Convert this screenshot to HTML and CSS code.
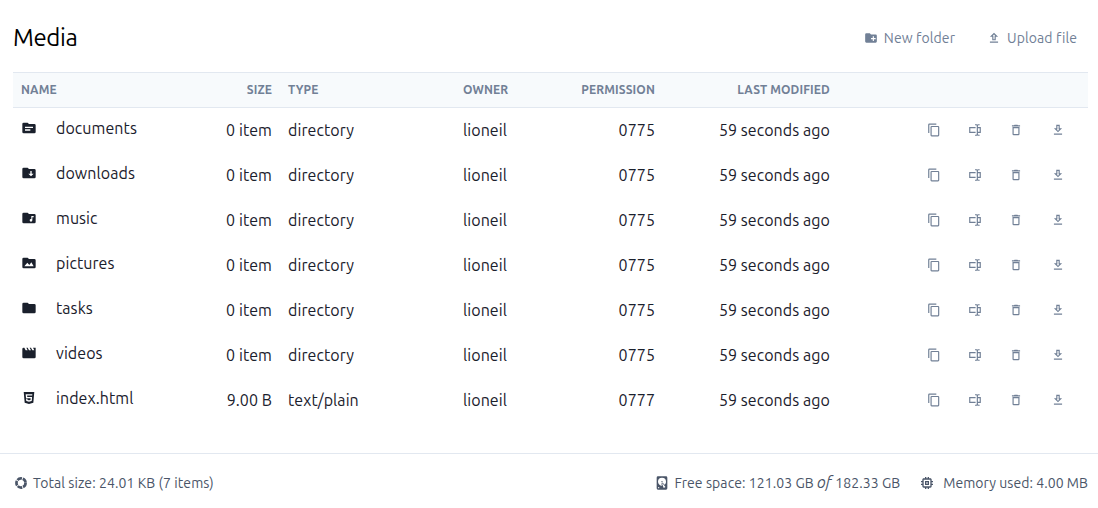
FILE: index.html
```
<!DOCTYPE html>
<html lang="en">
<head>
<meta charset="utf-8">
<title>Media</title>
<link rel="stylesheet" href="styles.css">
<script src="icons.js" defer></script>
</head>
<body>
<main class="page">
  <header class="topbar">
    <h1 class="title">Media</h1>
    <nav class="toolbar">
      <button class="tool"><i data-icon="folderPlus"></i><span>New folder</span></button>
      <button class="tool"><i data-icon="upload"></i><span>Upload file</span></button>
    </nav>
  </header>
  <table class="files">
    <colgroup><col class="c-name"><col class="c-size"><col class="c-type"><col class="c-owner"><col class="c-perm"><col class="c-date"><col class="c-actions"></colgroup>
    <thead>
      <tr><th>Name</th><th class="num">Size</th><th>Type</th><th>Owner</th><th class="num">Permission</th><th class="num">Last modified</th><th></th></tr>
    </thead>
    <tbody id="rows"></tbody>
  </table>
</main>
<footer class="status">
  <span class="stat"><i data-icon="donut"></i><span>Total size: 24.01 KB (7 items)</span></span>
  <span class="stat stat-free"><i data-icon="disk"></i><span>Free space: 121.03 GB <em class="of">of</em> 182.33 GB</span></span>
  <span class="stat stat-memory"><i data-icon="chip"></i><span>Memory used: 4.00 MB</span></span>
</footer>
</body>
</html>
```
FILE: icons.js
```
const folder = "M10,4H4A2,2 0 0,0 2,6V18A2,2 0 0,0 4,20H20A2,2 0 0,0 22,18V8A2,2 0 0,0 20,6H12Z";
const icons = {
  folder: folder,
  folderPlus: folder + "M15,9V12H12V14H15V17H17V14H20V12H17V9Z",
  folderText: folder + "M6,10H18V12H6ZM6,14H14V16H6Z",
  folderDown: folder + "M14,9H16V13H19L15,17L11,13H14Z",
  folderMusic: folder + "M19,9V11H17V15.5A2,2 0 1,1 15,13.5H15.5V9Z",
  folderImage: folder + "M5,17H19L15.5,11L12.5,15L9.5,11.5Z",
  movie: "M18,4L20,8H17L15,4H13L15,8H12L10,4H8L10,8H7L5,4H4A2,2 0 0,0 2,6V18A2,2 0 0,0 4,20H20A2,2 0 0,0 22,18V4Z",
  html: "M12,17.56L16.07,16.43L16.62,10.33H9.38L9.2,8.3H16.8L17,6.31H7L7.56,12.32H14.45L14.22,14.9L12,15.5L9.78,14.9L9.64,13.24H7.64L7.93,16.43ZM4.07,3H19.93L18.5,19.2L12,21L5.5,19.2Z",
  copy: "M19,21H8V7H19M19,5H8A2,2 0 0,0 6,7V21A2,2 0 0,0 8,23H19A2,2 0 0,0 21,21V7A2,2 0 0,0 19,5M16,1H4A2,2 0 0,0 2,3V17H4V3H16Z",
  rename: "M17,7H22V17H17V19A1,1 0 0,0 18,20H20V22H17.5C16.95,22 16,21.55 16,21C16,21.55 15.05,22 14.5,22H12V20H14A1,1 0 0,0 15,19V5A1,1 0 0,0 14,4H12V2H14.5C15.05,2 16,2.45 16,3C16,2.45 16.95,2 17.5,2H20V4H18A1,1 0 0,0 17,5V7M2,7H13V9H4V15H13V17H2V7M20,15V9H17V15H20Z",
  trash: "M6,19A2,2 0 0,0 8,21H16A2,2 0 0,0 18,19V7H6ZM8,9H16V19H8ZM15.5,4L14.5,3H9.5L8.5,4H5V6H19V4Z",
  download: "M13,5V11H14.17L12,13.17L9.83,11H11V5M15,3H9V9H5L12,16L19,9H15ZM19,18H5V20H19Z",
  upload: "M9,10V16H15V10H19L12,3L5,10ZM12,5.8L14.2,8H13V14H11V8H9.8ZM19,18H5V20H19Z",
  disk: "M6,2H18A2,2 0 0,1 20,4V20A2,2 0 0,1 18,22H6A2,2 0 0,1 4,20V4A2,2 0 0,1 6,2M12,4A6,6 0 0,0 6,10C6,13.31 8.69,16 12.1,16L11.22,13.77C10.95,13.29 11.11,12.68 11.59,12.4L12.45,11.9C12.93,11.63 13.54,11.79 13.82,12.27L15.74,14.69C17.12,13.59 18,11.9 18,10A6,6 0 0,0 12,4M12,9A1,1 0 0,1 13,10A1,1 0 0,1 12,11A1,1 0 0,1 11,10A1,1 0 0,1 12,9M7,18A1,1 0 0,0 6,19A1,1 0 0,0 7,20A1,1 0 0,0 8,19A1,1 0 0,0 7,18M12.09,13.27L14.58,19.58L17.17,18.08L12.95,12.77Z",
  chip: "M17,17H7V7H17M21,11V9H19V7C19,5.89 18.1,5 17,5H15V3H13V5H11V3H9V5H7C5.89,5 5,5.89 5,7V9H3V11H5V13H3V15H5V17A2,2 0 0,0 7,19H9V21H11V19H13V21H15V19H17A2,2 0 0,0 19,17V15H21V13H19V11M13,13H11V11H13M15,9H9V15H15Z"
};
const files = [
  ["folderText", "documents"], ["folderDown", "downloads"], ["folderMusic", "music"],
  ["folderImage", "pictures"], ["folder", "tasks"], ["movie", "videos"],
  ["html", "index.html", "9.00 B", "text/plain", "0777"]
];
document.getElementById("rows").innerHTML = files.map(([icon, name, size = "0 item", type = "directory", perm = "0775"]) =>
  `<tr><td><div class="entry"><i data-icon="${icon}"></i><span>${name}</span></div></td><td class="num">${size}</td><td>${type}</td><td>lioneil</td><td class="num">${perm}</td><td class="num">59 seconds ago</td><td><div class="actions"><i data-icon="copy"></i><i data-icon="rename"></i><i data-icon="trash"></i><i data-icon="download"></i></div></td></tr>`).join("");
document.querySelectorAll("[data-icon]").forEach(el => {
  const name = el.dataset.icon;
  el.className = "icon";
  el.innerHTML = name === "donut"
    ? `<svg viewBox="0 0 24 24"><circle class="ring" cx="12" cy="12" r="7.8" pathLength="100"/></svg>`
    : `<svg viewBox="0 0 24 24"><path fill-rule="evenodd" d="${icons[name]}"/></svg>`;
});
```
FILE: styles.css
```
* { box-sizing: border-box; }
body { margin: 0; height: 508px; display: flex; flex-direction: column; background: #fff; color: #1a202c; font-family: Ubuntu, "Noto Sans", sans-serif; font-size: 16px; letter-spacing: 0.07px; overflow: hidden; }
.page { flex: 1; padding: 0 10px 0 13px; }
.topbar { height: 72px; display: flex; align-items: center; justify-content: space-between; padding-top: 3px; }
.title { margin: 0; font-size: 24px; font-weight: 400; color: #000; line-height: 36px; letter-spacing: -0.4px; }
.toolbar { display: flex; gap: 32px; padding-right: 11px; }
.tool { display: flex; align-items: center; gap: 6px; padding: 0; border: 0; background: none; color: #718096; font-family: inherit; font-size: 14px; line-height: 20px; letter-spacing: 0.1px; }
.icon { display: block; flex: none; width: 14px; height: 14px; }
.icon svg { display: block; width: 100%; height: 100%; fill: currentColor; }
.icon .ring { fill: none; stroke: currentColor; stroke-width: 4.6; stroke-dasharray: 17 3; }
.files { width: 1075px; table-layout: fixed; border-collapse: separate; border-spacing: 0; }
.c-name { width: 175px; }
.c-size { width: 92px; }
.c-type { width: 175px; }
.c-owner { width: 104px; }
.c-perm { width: 104px; }
.c-date { width: 175px; }
th { height: 36px; padding: 0 8px; border: solid #e2e8f0; border-width: 1px 0; background: #f7fafc; color: #718096; font-size: 12px; font-weight: 700; line-height: 18px; letter-spacing: 0.13px; text-align: left; text-transform: uppercase; }
td { height: 45px; padding: 0 8px 1px; line-height: 24px; white-space: nowrap; }
.num { text-align: right; }
.entry { display: flex; align-items: center; gap: 19px; padding-bottom: 4px; }
.entry .icon { width: 16px; height: 16px; }
.actions { display: flex; justify-content: flex-end; gap: 27.3px; padding: 0 15.5px 1px 0; color: #718096; }
.status { height: 55px; display: flex; align-items: center; padding: 3px 10px 0 14px; border-top: 1px solid #e2e8f0; color: #4a5568; font-size: 14px; line-height: 20px; letter-spacing: 0.08px; white-space: nowrap; }
.stat { display: flex; align-items: center; gap: 5px; }
.stat-free { margin-left: auto; gap: 4px; }
.stat-memory { margin-left: 19px; gap: 8px; letter-spacing: 0.05px; }
.stat-free .icon, .stat-memory .icon { width: 16px; height: 16px; }
.of { font-size: 16px; line-height: 16px; }
```
